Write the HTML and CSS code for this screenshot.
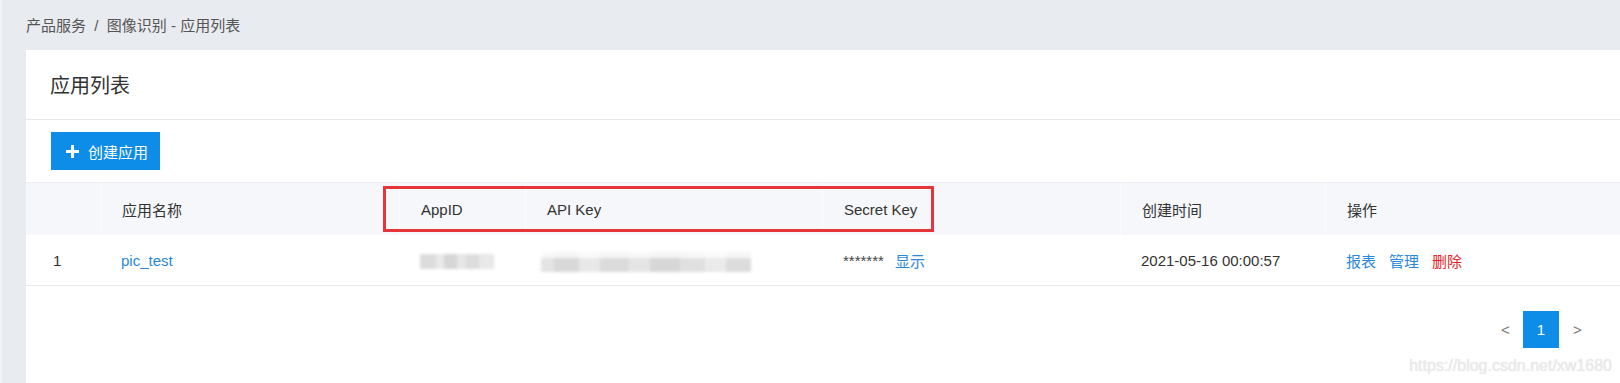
FILE: index.html
```html
<!DOCTYPE html>
<html lang="zh-CN">
<head>
<meta charset="utf-8">
<title>应用列表</title>
<link rel="stylesheet" href="styles.css">
</head>
<body>
<div class="page">
  <div class="crumbs">产品服务 &nbsp;/&nbsp; 图像识别 - 应用列表</div>
  <div class="card">
    <div class="card-head">应用列表</div>
    <div class="toolbar">
      <button class="btn-primary">
        <svg class="plus" width="13" height="13" viewBox="0 0 13 13"><rect x="5" y="0" width="3" height="13" fill="#fff"/><rect x="0" y="5" width="13" height="3" fill="#fff"/></svg>
        <span>创建应用</span>
      </button>
    </div>
    <div class="table">
      <div class="row head">
        <div class="cell first"></div>
        <div class="cell">应用名称</div>
        <div class="cell">AppID</div>
        <div class="cell">API Key</div>
        <div class="cell">Secret Key</div>
        <div class="cell">创建时间</div>
        <div class="cell">操作</div>
        <div class="mark"></div>
      </div>
      <div class="row body">
        <div class="cell first">1</div>
        <div class="cell"><a class="link">pic_test</a></div>
        <div class="cell"><span class="blur blur-id"></span></div>
        <div class="cell"><span class="blur blur-key"></span></div>
        <div class="cell"><span class="stars">*******</span><a class="link">显示</a></div>
        <div class="cell">2021-05-16 00:00:57</div>
        <div class="cell ops"><a class="link">报表</a><a class="link">管理</a><a class="link danger">删除</a></div>
      </div>
    </div>
    <div class="pager">
      <span class="pg-arrow">&lt;</span>
      <span class="pg-num">1</span>
      <span class="pg-arrow">&gt;</span>
    </div>
    <div class="watermark">https://blog.csdn.net/xw1680</div>
  </div>
</div>
</body>
</html>
```
FILE: styles.css
```css
* { box-sizing: border-box; }
html, body { margin: 0; padding: 0; }
body {
  background: #e8ebef;
  font-family: "Liberation Sans", Arial, "Noto Sans CJK SC", sans-serif;
  font-size: 15px;
  color: #333;
  height: 383px;
  overflow: hidden;
}
.page {
  height: 383px;
  display: flex;
  flex-direction: column;
  border-left: 2px solid #f0f2f5;
}
.crumbs {
  height: 50px;
  line-height: 52px;
  padding-left: 24px;
  color: #555;
  font-size: 15px;
  flex: none;
}
.card {
  flex: 1;
  margin-left: 24px;
  background: #fff;
  position: relative;
}
.card-head {
  height: 70px;
  line-height: 72px;
  padding-left: 24px;
  font-size: 20px;
  color: #333;
  border-bottom: 1px solid #e8e8e8;
}
.toolbar {
  padding: 12px 0 12px 25px;
}
.btn-primary {
  display: flex;
  align-items: center;
  gap: 9px;
  height: 38px;
  width: 109px;
  padding: 0 0 0 15px;
  border: none;
  background: #0e8de8;
  color: #fff;
  font-family: inherit;
  font-size: 15px;
}
.plus { display: block; }
.table {
  border-top: 1px solid #ebedf0;
}
.row {
  display: grid;
  grid-template-columns: 74px 299px 126px 297px 298px 205px 1fr;
  position: relative;
}
.row.head {
  height: 52px;
  background: #f5f7fa;
}
.row.body {
  height: 51px;
  border-bottom: 1px solid #e8e8e8;
}
.cell {
  display: flex;
  align-items: center;
  padding-left: 21px;
  white-space: nowrap;
}
.row.head .cell + .cell { border-left: 1px solid #fbfcfd; }
.cell.first { padding-left: 27px; }
.row.body .cell { padding-top: 1px; }
.link { color: #2a88dc; cursor: pointer; }
.link.danger { color: #e3262b; }
.ops .link { margin-right: 13px; }
.stars { margin-right: 11px; color: #444; }
.mark {
  position: absolute;
  left: 357px;
  top: 3px;
  width: 551px;
  height: 46px;
  border: 3px solid #e3353b;
  pointer-events: none;
}
.blur {
  display: block;
  filter: blur(1.8px);
}
.blur-id {
  width: 74px;
  height: 15px;
  margin-top: 1px;
  background: linear-gradient(90deg, #dcdcdc 0 22%, #e9e9e9 22% 32%, #d6d6d6 32% 50%, #e6e6e6 50% 62%, #dddddd 62% 80%, #e8e8e8 80% 100%);
}
.blur-key {
  width: 210px;
  height: 20px;
  margin-left: -5px;
  margin-top: 2px;
  background:
    linear-gradient(180deg, rgba(255,255,255,0.75) 0 30%, rgba(255,255,255,0) 30%),
    linear-gradient(90deg, #e4e4e4 0 6%, #d8d8d8 6% 18%, #e8e8e8 18% 28%, #dbdbdb 28% 42%, #e5e5e5 42% 52%, #d7d7d7 52% 66%, #e0e0e0 66% 78%, #eaeaea 78% 88%, #dcdcdc 88% 100%);
}
.pager {
  display: flex;
  justify-content: flex-end;
  align-items: center;
  padding: 25px 39px 0 0;
  gap: 14px;
}
.pg-arrow {
  color: #777;
  font-size: 15px;
  width: 8px;
  text-align: center;
}
.pg-num {
  width: 36px;
  height: 37px;
  background: #0e8de8;
  color: #fff;
  display: flex;
  align-items: center;
  justify-content: center;
  font-size: 15px;
}
.watermark {
  position: absolute;
  right: 8px;
  bottom: 8px;
  font-size: 16px;
  color: rgba(238,238,238,0.9);
  text-shadow: 0 0 1px rgba(150,150,150,0.4);
}
```
